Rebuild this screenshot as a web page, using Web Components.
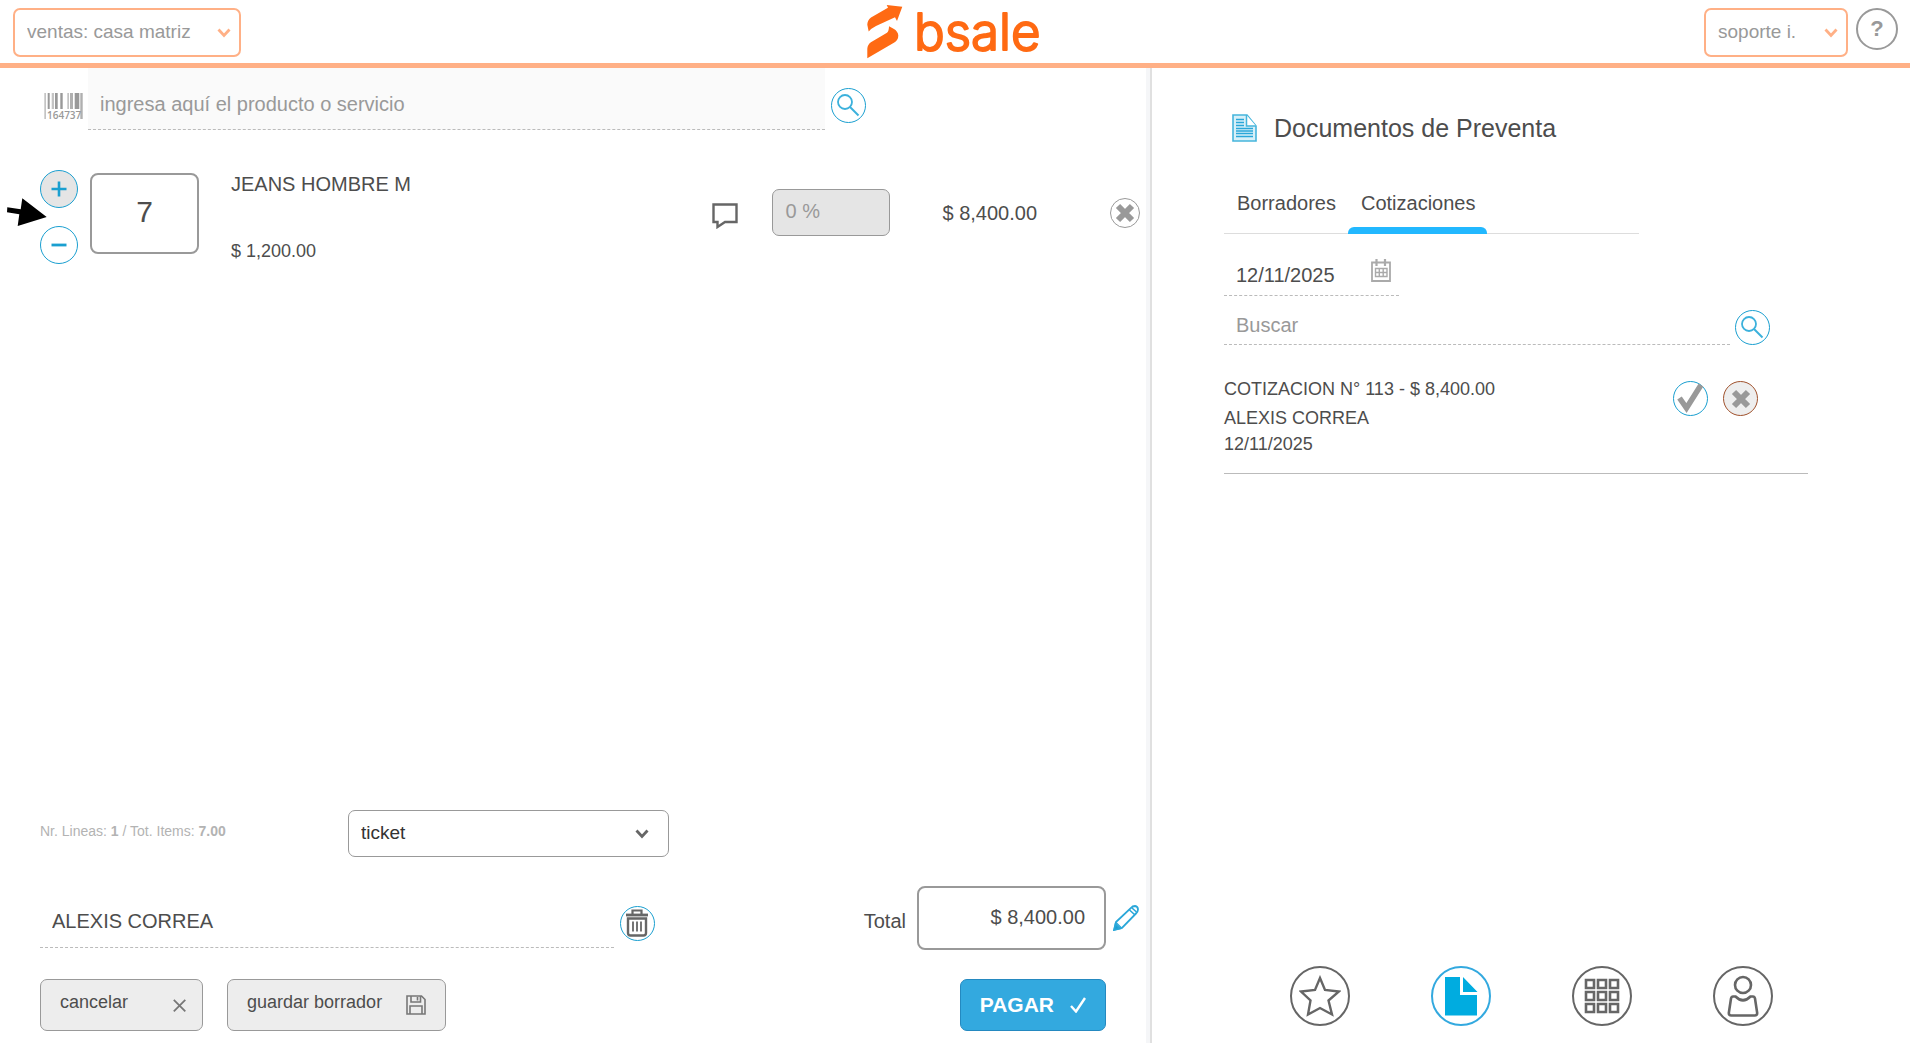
<!DOCTYPE html>
<html lang="es">
<head>
<meta charset="utf-8">
<title>bsale - ventas</title>
<style>
    body {
        margin: 0;
        font-family: "Liberation Sans", Arial, sans-serif;
        font-size: 20px;
        line-height: 24px;
        color: #4d4d4d;
        background: #fff;
    }
</style>
</head>
<body>
<bs-app></bs-app>

<script>
const icons = {
    chevron: `<svg width="14" height="10" viewBox="0 0 14 10"><path d="M1.5 1.5 7 7.500 12.500 1.500" fill="none" stroke="currentColor" stroke-width="2.800"/></svg>`,
    search: `<svg width="23" height="23" viewBox="0 0 23 23" fill="none" stroke="#3cb1dc"><circle cx="8" cy="8" r="7" stroke-width="1.800"/><path d="M13 13 21.500 21.500" stroke-width="2"/></svg>`,
    plus: `<svg width="16" height="16" viewBox="0 0 16 16"><path d="M8 .5v15M.5 8h15" stroke="#1a9fd0" stroke-width="2.600"/></svg>`,
    minus: `<svg width="16" height="16" viewBox="0 0 16 16"><path d="M.5 8h15" stroke="#1a9fd0" stroke-width="2.800"/></svg>`,
    cross: `<svg width="20" height="20" viewBox="0 0 20 20"><path d="M3 3l14 14M17 3 3 17" stroke="#999" stroke-width="6"/></svg>`,
    tick: `<svg width="27" height="31" viewBox="0 0 27 31"><path d="M2.500 15 9.500 25 24 2" fill="none" stroke="#999" stroke-width="5.500"/></svg>`,
    trash: `<svg width="24" height="28" viewBox="0 0 24 28" fill="none" stroke="#666"><path d="M7.500 5V1.500h9V5" stroke-width="2.200"/><path d="M1 6h22" stroke-width="2.800"/><path d="M3 9.500V24q0 2.500 2.500 2.500h13q2.500 0 2.500-2.500V9.500z" stroke-width="2.400"/><path d="M8 12.500v10M12 12.500v10M16 12.500v10" stroke-width="1.800"/></svg>`,
    comment: `<svg width="26" height="26" viewBox="0 0 26 26"><path d="M1.500 1.500h23v17.500H13l-7.500 5V19h-4z" fill="none" stroke="#666" stroke-width="2.400"/></svg>`,
    close: `<svg width="13" height="13" viewBox="0 0 13 13"><path d="M.8.800l11.500 11.500M12.300.800.800 12.300" stroke="#777" stroke-width="1.800"/></svg>`,
    floppy: `<svg width="20" height="20" viewBox="0 0 20 20" fill="none" stroke="#777" stroke-width="1.600"><path d="M1 1h14.500L19 4.500V19H1zM5 1v6h9.500V1M4 19v-8h12v8"/><path d="M11.500 2v3.500"/></svg>`,
    check: `<svg width="16" height="16" viewBox="0 0 16 16"><path d="M1 9l5 5.500L15 1" fill="none" stroke="#fff" stroke-width="2.400"/></svg>`,
    pencil: `<svg width="26" height="26" viewBox="0 0 26 26" fill="none" stroke="#2aa7d9" stroke-width="1.800"><path d="M1.500 24.500 3 17 18 3q1.500-2 4-2 3 .5 3 3.500 0 2-2 4L9 23z"/><path d="M16.500 5l5 4.500M19 3l4.500 4" stroke-width="1.600"/><path d="M3 17.500l5.500 5.500" stroke-width="1.300"/><path d="M1 25l1.500-6 4.500 4.500z" fill="#1a9fd0"/></svg>`,
    doc: `<svg width="25" height="28" viewBox="0 0 25 28"><path d="M1 1h14l9 11v15H1z" fill="#d8f0f8" stroke="#45b5dc" stroke-width="1.600"/><path d="M14.500 1v11H24" fill="#fff" stroke="#45b5dc" stroke-width="1.500"/><path d="M4 5.500h8M4 8.500h8M4 11.500h8M4 14.500h17M4 17h17M4 19.500h17M4 22.500h17" stroke="#2aa7d9" stroke-width="1.300"/></svg>`,
    calendar: `<svg width="20" height="23" viewBox="0 0 20 23" fill="none" stroke="#aaa"><path d="M1 3.500h18V22H1z" stroke-width="1.800"/><path d="M5.500 0v7M14 0v7" stroke-width="2.200"/><path d="M4.500 9.500h11.500v8H4.500zM4.500 13.500H16M8.300 9.500v8M12.200 9.500v8" stroke-width="1.400"/></svg>`,
    star: `<svg width="42" height="42" viewBox="0 0 42 42"><path d="M21 3l5 12 14 1.500-10.500 9 3.500 14L21 33 9 39.500l2.500-14L2 16.500 16 15z" fill="none" stroke="#666" stroke-width="2.400"/></svg>`,
    file: `<svg width="34" height="40" viewBox="0 0 34 40" fill="#00ace0"><path d="M1 1h15v18h17v20.500H1zM19 1v15h14.500z"/></svg>`,
    grid: `<svg width="36" height="36" viewBox="0 0 36 36" fill="none" stroke="#666" stroke-width="2.600"><path d="M2 2h8v8H2zM14 2h8v8h-8zM26 2h8v8h-8zM2 14h8v8H2zM14 14h8v8h-8zM26 14h8v8h-8zM2 26h8v8H2zM14 26h8v8h-8zM26 26h8v8h-8z"/></svg>`,
    user: `<svg width="32" height="42" viewBox="0 0 32 42" fill="none" stroke="#666" stroke-width="2.600"><circle cx="16" cy="10" r="8"/><path d="M6 21.500q-1.500 0-2 2L1.800 38q0 2.500 2.500 2.500h23.400q2.500 0 2.500-2.500L28 23.500q-.5-2-2-2h-2.500q-7.500 7.500-15 0z"/></svg>`,
    barcode: `<svg width="39" height="32" viewBox="0 0 39 32"><path d="M.3 0H2v26H.3zM7.700 0H10v16H7.700zM23.300 0H25v16h-1.700z" fill="#c4c4c4"/><path d="M3.700 0h2v16h-2zM11 0h2.700v16H11zM16.300 0h2.400v16h-2.400zM30.700 0h4.600v16h-4.600z" fill="#999"/><path d="M26 0h3v16h-3zM36.300 0h2.400v26h-2.400z" fill="#b0b0b0"/><text x="3" y="26" font-family="Open Sans, sans-serif" font-size="10" font-weight="600" fill="#999">164737</text></svg>`,
    logo: `<svg width="178" height="63" viewBox="0 -5 178 63" fill="#ff6a13"><path d="M35.300 1.700 19.700 0 21 2.700 4 12.500Q.3 15.500.3 19.700L1.700 26.500Q4 23.500 9 21L28 12.300 30 16z"/><path d="M22 21.300 27 24q4 2.500 4.300 6.500 0 4.500-4 7L.3 53.300V43.700q.2-4.200 4-6.700L20 27.700q2-1.500 2-6.400z"/><text x="47" y="45" font-family="Inter, sans-serif" font-size="51" font-weight="300" stroke="#ff6a13" stroke-width="2" stroke-linejoin="round">bsale</text></svg>`
};

const reset = `
    * { box-sizing: border-box; }
    button, input, select { font: inherit; color: inherit; margin: 0; padding: 0; border: 0; background: none; border-radius: 0; outline: 0; }
    button { cursor: pointer; }
    input { min-width: 0; width: 100%; }
    input::placeholder { color: #999; opacity: 1; }
    svg { display: block; flex: none; }
    h2, p, ul { margin: 0; padding: 0; font-weight: normal; }
`;

class BsElement extends HTMLElement {
    constructor() {
        super();
        this.attachShadow({ mode: "open" });
    }

    connectedCallback() {
        this.shadowRoot.innerHTML = `<style>${reset}</style>${this.render()}`;
    }

    attr(name, def = "") {
        return this.getAttribute(name) || def;
    }
}

class BsRoundButton extends BsElement {
    render() {
        return `
            <style>
                :host { display: block; flex: none; }
                button {
                    display: grid;
                    place-items: center;
                    width: var(--size, 35px);
                    height: var(--size, 35px);
                    border: var(--line, 1px) solid var(--ring, #1a9fd0);
                    border-radius: 50%;
                    background: var(--fill, #fff);
                    color: #999;
                    font-size: 22px;
                    font-weight: bold;
                }
            </style>
            <button type="button" aria-label="${this.attr("label")}">${icons[this.attr("icon")] || "<slot></slot>"}</button>
        `;
    }
}

class BsIconButton extends BsElement {
    render() {
        return `
            <style>
                :host { display: block; flex: none; }
                button { display: block; }
            </style>
            <button type="button" aria-label="${this.attr("label")}">${icons[this.attr("icon")]}</button>
        `;
    }
}

class BsSelect extends BsElement {
    render() {
        return `
            <style>
                :host { display: grid; font-size: 19px; }
                select, svg { grid-area: 1 / 1; }
                select {
                    appearance: none;
                    width: 100%;
                    height: var(--height, 49px);
                    padding: 0 40px 2px 12px;
                    border: var(--line, 2px) solid var(--edge, #ffb086);
                    border-radius: 7px;
                    background: #fff;
                    color: var(--text, #999);
                }
                svg {
                    place-self: center end;
                    margin-right: var(--inset, 10px);
                    color: var(--arrow, #ffb086);
                    pointer-events: none;
                }
            </style>
            <select aria-label="${this.attr("label")}"><option>${this.attr("value")}</option></select>
            ${icons.chevron}
        `;
    }
}

class BsHeader extends BsElement {
    render() {
        return `
            <style>
                :host {
                    display: grid;
                    grid-template-columns: 1fr auto 1fr;
                    align-items: start;
                    height: 68px;
                    padding: 0 12px 0 13px;
                    border-bottom: 5px solid #ffb086;
                }
                .branch { width: 228px; margin-top: 8px; }
                .user { display: flex; justify-content: flex-end; gap: 8px; margin-top: 8px; }
                .user bs-select { width: 144px; }
                .user bs-round-button { --size: 42px; --line: 2px; --ring: #999; }
            </style>
            <bs-select class="branch" label="sucursal" value="ventas: casa matriz"></bs-select>
            ${icons.logo}
            <div class="user">
                <bs-select label="usuario" value="soporte i."></bs-select>
                <bs-round-button label="ayuda">?</bs-round-button>
            </div>
        `;
    }
}

class BsProductSearch extends BsElement {
    render() {
        return `
            <style>
                :host { display: flex; padding: 0 280px 0 44px; }
                .code { margin: 25px 5px 0 0; }
                input {
                    flex: 1;
                    height: 62px;
                    padding: 12px 12px 0;
                    border-bottom: 1px dashed #bbb;
                    background: #fafafa;
                }
                bs-round-button { margin: 20px 0 0 6px; }
            </style>
            <div class="code">${icons.barcode}</div>
            <input type="text" aria-label="producto o servicio" placeholder="ingresa aquí el producto o servicio">
            <bs-round-button icon="search" label="buscar producto"></bs-round-button>
        `;
    }
}

class BsLineItem extends BsElement {
    render() {
        return `
            <style>
                :host { display: flex; align-items: flex-start; position: relative; padding: 0 6px 0 40px; }
                .stepper { display: grid; gap: 18px; margin-right: 12px; --size: 38px; }
                .add { --fill: #e5e5e5; }
                .qty {
                    width: 109px;
                    height: 81px;
                    margin-top: 3px;
                    padding-bottom: 3px;
                    border: 2px solid #999;
                    border-radius: 8px;
                    font-size: 30px;
                    text-align: center;
                }
                .info { flex: 1; display: grid; gap: 44px; margin: 2px 0 0 32px; }
                .price { font-size: 18px; line-height: 22px; }
                .actions { display: flex; align-items: center; height: 79px; margin-top: 3px; }
                .comment { padding-top: 6px; }
                .discount {
                    width: 118px;
                    height: 47px;
                    margin: 0 52px 0 34px;
                    padding: 0 12px 2px;
                    border: 1px solid #999;
                    border-radius: 7px;
                    background: #e5e5e5;
                    color: #999;
                }
                .remove { --size: 30px; --ring: #999; margin-left: 73px; }
                .pointer { position: absolute; left: 7px; top: 28px; }
            </style>
            <div class="stepper">
                <bs-round-button class="add" icon="plus" label="agregar"></bs-round-button>
                <bs-round-button icon="minus" label="quitar"></bs-round-button>
            </div>
            <input class="qty" type="text" aria-label="cantidad" value="${this.attr("qty")}">
            <div class="info">
                <p><slot></slot></p>
                <p class="price">${this.attr("price")}</p>
            </div>
            <div class="actions">
                <bs-icon-button class="comment" icon="comment" label="comentario"></bs-icon-button>
                <input class="discount" type="text" aria-label="descuento" value="${this.attr("discount")}" disabled>
                <span>${this.attr("total")}</span>
                <bs-round-button class="remove" icon="cross" label="eliminar"></bs-round-button>
            </div>
            <svg class="pointer" width="40" height="28" viewBox="0 0 40 28"><path d="M.3 9.300 13.700 11.300 15.300.300 39.700 19 10.700 28l1.600-11.700L0 14.300z"/></svg>
        `;
    }
}

class BsButton extends BsElement {
    render() {
        return `
            <style>
                :host { display: block; }
                button {
                    display: flex;
                    align-items: center;
                    gap: var(--gap, 24px);
                    height: 52px;
                    padding: 0 var(--end, 19px) 0 19px;
                    border: 1px solid #999;
                    border-radius: 7px;
                    background: #ededed;
                    font-size: 18px;
                }
                span { padding-bottom: 6px; }
                :host([primary]) button {
                    border-color: #2489c0;
                    background: #33a9df;
                    color: #fff;
                    font-size: 21px;
                    font-weight: bold;
                }
                :host([primary]) span { padding: 0; }
            </style>
            <button type="button"><span><slot></slot></span>${icons[this.attr("icon")]}</button>
        `;
    }
}

class BsCheckout extends BsElement {
    render() {
        return `
            <style>
                :host { display: grid; gap: 29px; padding: 0 7px 12px 40px; }
                .row { display: flex; align-items: center; }
                .count { width: 308px; padding-bottom: 6px; font-size: 14px; color: #b3b3b3; }
                bs-select {
                    width: 321px;
                    --height: 47px;
                    --line: 1px;
                    --edge: #999;
                    --text: #333;
                    --arrow: #666;
                    --inset: 20px;
                }
                .client { flex: 1; display: flex; align-items: center; gap: 6px; margin-right: 209px; padding-top: 10px; }
                .client input { height: 50px; padding: 0 12px 2px; border-bottom: 1px dashed #bbb; }
                label { padding-top: 6px; }
                .total {
                    width: 189px;
                    height: 64px;
                    margin: 0 7px 0 11px;
                    padding: 0 19px 2px;
                    border: 2px solid #999;
                    border-radius: 8px;
                    text-align: right;
                }
                .save { --gap: 24px; margin-left: 24px; }
                .cancel { --gap: 45px; --end: 16px; }
                .pay { --gap: 16px; margin: 0 33px 0 auto; }
            </style>
            <div class="row">
                <p class="count">Nr. Lineas: <b>1</b> / Tot. Items: <b>7.00</b></p>
                <bs-select label="tipo de documento" value="ticket"></bs-select>
            </div>
            <div class="row">
                <div class="client">
                    <input type="text" aria-label="cliente" value="ALEXIS CORREA">
                    <bs-round-button icon="trash" label="quitar cliente"></bs-round-button>
                </div>
                <label for="total">Total</label>
                <input class="total" id="total" type="text" value="$ 8,400.00">
                <bs-icon-button icon="pencil" label="editar total"></bs-icon-button>
            </div>
            <div class="row">
                <bs-button class="cancel" icon="close">cancelar</bs-button>
                <bs-button class="save" icon="floppy">guardar borrador</bs-button>
                <bs-button class="pay" icon="check" primary>PAGAR</bs-button>
            </div>
        `;
    }
}

class BsTabs extends BsElement {
    render() {
        const tabs = this.attr("tabs").split(",");
        return `
            <style>
                :host { display: flex; width: 71%; border-bottom: 1px solid #ddd; }
                button { display: block; margin-bottom: -1px; }
                span { display: block; padding: 0 12px 12px 13px; }
                button::after { content: ""; display: block; height: 7px; border-radius: 6px 6px 0 0; }
                button[aria-selected="true"]::after { background: #22b8ff; }
            </style>
            ${tabs.map(t => `<button type="button" role="tab" aria-selected="${t === this.attr("active")}"><span>${t}</span></button>`).join("")}
        `;
    }
}

class BsQuote extends BsElement {
    render() {
        return `
            <style>
                :host {
                    display: flex;
                    justify-content: space-between;
                    padding: 0 50px 16px 0;
                    border-bottom: 1px solid #bbb;
                    font-size: 18px;
                    line-height: 26px;
                }
                .first { margin-bottom: 3px; }
                .actions { display: flex; gap: 15px; margin-top: 5px; }
                .drop { --ring: #a0522d; --fill: #eee; }
            </style>
            <div>
                <p class="first"><slot></slot></p>
                <p>${this.attr("client")}</p>
                <p>${this.attr("date")}</p>
            </div>
            <div class="actions">
                <bs-round-button icon="tick" label="usar"></bs-round-button>
                <bs-round-button class="drop" icon="cross" label="descartar"></bs-round-button>
            </div>
        `;
    }
}

class BsNav extends BsElement {
    render() {
        return `
            <style>
                :host { display: flex; justify-content: space-around; --size: 60px; --line: 2px; --ring: #666; }
                .active { --ring: #33a9df; }
            </style>
            <bs-round-button icon="star" label="favoritos"></bs-round-button>
            <bs-round-button class="active" icon="file" label="documentos"></bs-round-button>
            <bs-round-button icon="grid" label="productos"></bs-round-button>
            <bs-round-button icon="user" label="clientes"></bs-round-button>
        `;
    }
}

class BsPresale extends BsElement {
    render() {
        return `
            <style>
                :host { display: flex; flex-direction: column; padding: 45px 0 17px; }
                .content { padding: 0 102px 0 72px; }
                .title { display: flex; align-items: center; gap: 17px; padding-left: 8px; }
                h2 { font-size: 25px; line-height: 30px; }
                bs-tabs { margin-top: 48px; }
                .date {
                    display: flex;
                    align-items: flex-start;
                    width: 175px;
                    margin-top: 25px;
                    padding-right: 8px;
                    border-bottom: 1px dashed #bbb;
                }
                .date input { height: 36px; padding: 0 0 3px 12px; line-height: 24px; }
                .search { display: flex; align-items: flex-end; gap: 5px; padding-right: 38px; }
                .search input { height: 49px; padding: 11px 12px 0; border-bottom: 1px dashed #bbb; }
                bs-quote { margin-top: 31px; }
                bs-nav { margin-top: auto; padding: 0 97px; }
            </style>
            <div class="content">
                <div class="title">${icons.doc}<h2>Documentos de Preventa</h2></div>
                <bs-tabs tabs="Borradores,Cotizaciones" active="Cotizaciones"></bs-tabs>
                <div class="date">
                    <input type="text" aria-label="fecha" value="12/11/2025">
                    <bs-icon-button icon="calendar" label="calendario"></bs-icon-button>
                </div>
                <div class="search">
                    <input type="text" aria-label="buscar documento" placeholder="Buscar">
                    <bs-round-button icon="search" label="buscar"></bs-round-button>
                </div>
                <bs-quote client="ALEXIS CORREA" date="12/11/2025">COTIZACION N° 113 - $ 8,400.00</bs-quote>
            </div>
            <bs-nav></bs-nav>
        `;
    }
}

class BsApp extends BsElement {
    render() {
        return `
            <style>
                :host { display: flex; flex-direction: column; min-height: 100vh; }
                main { flex: 1; display: grid; grid-template-columns: minmax(0, 1152fr) minmax(0, 758fr); }
                .sale {
                    display: flex;
                    flex-direction: column;
                    border-right: 2px solid #e0e0e0;
                    box-shadow: inset -4px 0 #f5f6f8;
                    padding-right: 4px;
                }
                bs-line-item { margin-top: 40px; }
                bs-checkout { margin-top: auto; }
            </style>
            <bs-header></bs-header>
            <main>
                <section class="sale">
                    <bs-product-search></bs-product-search>
                    <bs-line-item qty="7" price="$ 1,200.00" discount="0 %" total="$ 8,400.00">JEANS HOMBRE M</bs-line-item>
                    <bs-checkout></bs-checkout>
                </section>
                <bs-presale></bs-presale>
            </main>
        `;
    }
}

customElements.define("bs-round-button", BsRoundButton);
customElements.define("bs-icon-button", BsIconButton);
customElements.define("bs-select", BsSelect);
customElements.define("bs-header", BsHeader);
customElements.define("bs-product-search", BsProductSearch);
customElements.define("bs-line-item", BsLineItem);
customElements.define("bs-button", BsButton);
customElements.define("bs-checkout", BsCheckout);
customElements.define("bs-tabs", BsTabs);
customElements.define("bs-quote", BsQuote);
customElements.define("bs-nav", BsNav);
customElements.define("bs-presale", BsPresale);
customElements.define("bs-app", BsApp);
</script>
</body>
</html>
